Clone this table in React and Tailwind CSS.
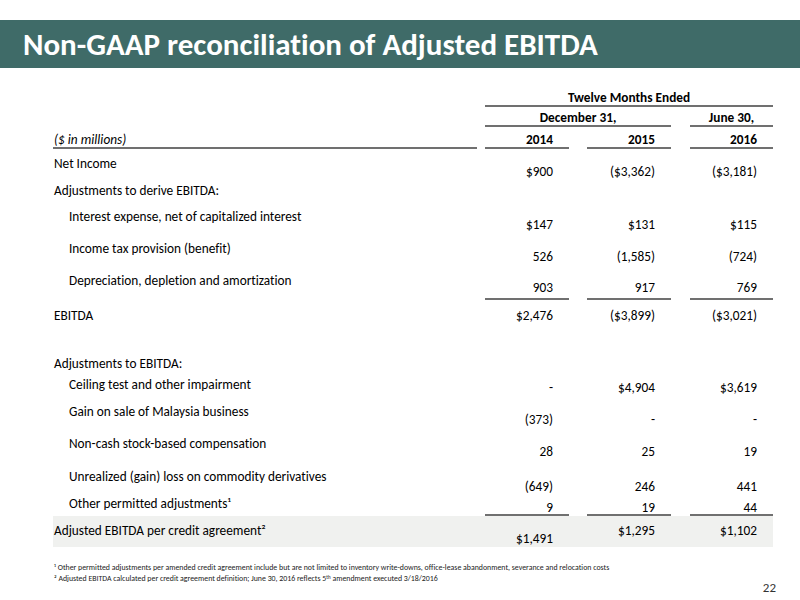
import React from "react";

const LINE = "border-b-2 border-[#707070]";

const rows = [
  { label: "Net Income", h: 31, lp: 7, vals: ["$900", "($3,362)", "($3,181)"], vp: [15, 15, 15] },
  { label: "Adjustments to derive EBITDA:", h: 23, lp: 3 },
  { label: "Interest expense, net of capitalized interest", indent: true, h: 35, lp: 6, vals: ["$147", "$131", "$115"], vp: [14, 14, 14] },
  { label: "Income tax provision (benefit)", indent: true, h: 32, lp: 3, vals: ["526", "(1,585)", "(724)"], vp: [11, 11, 11] },
  { label: "Depreciation, depletion and amortization", indent: true, h: 30, lp: 3, vals: ["903", "917", "769"], vp: [10, 10, 10], line: true },
  { label: "EBITDA", h: 31, lp: 8, vals: ["$2,476", "($3,899)", "($3,021)"], vp: [8, 8, 8] },
  { label: "Adjustments to EBITDA:", h: 41, lp: 25 },
  { label: "Ceiling test and other impairment", indent: true, h: 29, lp: 5, vals: ["-", "$4,904", "$3,619"], vp: [8, 8, 8] },
  { label: "Gain on sale of Malaysia business", indent: true, h: 30, lp: 3, vals: ["(373)", "-", "-"], vp: [11, 11, 11] },
  { label: "Non-cash stock-based compensation", indent: true, h: 32, lp: 5, vals: ["28", "25", "19"], vp: [13, 13, 13] },
  { label: "Unrealized (gain) loss on commodity derivatives", indent: true, h: 33, lp: 6, vals: ["(649)", "246", "441"], vp: [16, 16, 16] },
  { label: "Other permitted adjustments¹", indent: true, h: 20, lp: 0, vals: ["9", "19", "44"], vp: [4, 4, 4], line: true },
  { label: "Adjusted EBITDA per credit agreement²", h: 31, lp: 7, vals: ["$1,491", "$1,295", "$1,102"], vp: [15, 7, 7], shade: true },
];

const colW = ["w-[84px]", "w-[84px]", "w-[83px]"];
const gapW = ["w-[8px]", "w-[18px]", "w-[19px]"];

function Row({ r }) {
  return (
    <div
      className={`flex w-[720px] ${r.shade ? "bg-[#f0f1ef]" : ""}`}
      style={{ height: r.h }}
    >
      <div className={`w-[424px] shrink-0 ${r.indent ? "pl-[16px]" : "pl-[1px]"}`} style={{ paddingTop: r.lp }}>
        {r.label}
      </div>
      {[0, 1, 2].map((i) => (
        <React.Fragment key={i}>
          <div className={`${gapW[i]} shrink-0`} />
          <div
            className={`${colW[i]} shrink-0 text-right pr-4 ${r.line ? LINE : ""}`}
            style={{ paddingTop: r.vals ? r.vp[i] : 0 }}
          >
            {r.vals ? r.vals[i] : ""}
          </div>
        </React.Fragment>
      ))}
    </div>
  );
}

export default function App() {
  return (
    <div className="w-[800px] h-[600px] bg-white text-black font-['Carlito','Liberation_Sans',sans-serif] [font-variant-ligatures:none] overflow-hidden">
      <div className="h-[20px]" />
      <div className="h-[48px] bg-[#3f6b68] flex items-center pl-[23px]">
        <h1 className="text-white font-bold text-[31px] leading-[48px]">
          Non-GAAP reconciliation of Adjusted EBITDA
        </h1>
      </div>

      <div className="ml-[53px] text-[13.3px] leading-[16px]">
        <div className="pt-[22px] flex font-bold">
          <div className="w-[432px] shrink-0" />
          <div className={`w-[288px] text-center leading-[15px] ${LINE}`}>Twelve Months Ended</div>
        </div>
        <div className="mt-[3px] flex font-bold">
          <div className="w-[432px] shrink-0" />
          <div className={`w-[186px] text-center leading-[15px] ${LINE}`}>December 31,</div>
          <div className="w-[19px] shrink-0" />
          <div className={`w-[83px] text-center leading-[15px] ${LINE}`}>June 30,</div>
        </div>
        <div className="mt-[5px] flex">
          <div className={`w-[424px] shrink-0 italic leading-[15px] pl-[1px] ${LINE}`}>($ in millions)</div>
          {[0, 1, 2].map((i) => (
            <React.Fragment key={i}>
              <div className={`${gapW[i]} shrink-0`} />
              <div className={`${colW[i]} shrink-0 text-right pr-4 font-bold leading-[15px] ${LINE}`}>
                {["2014", "2015", "2016"][i]}
              </div>
            </React.Fragment>
          ))}
        </div>

        <div className="flex flex-col">
          {rows.map((r, i) => (
            <Row key={i} r={r} />
          ))}
        </div>
      </div>

      <div className="flex justify-between items-start">
        <div className="ml-[54px] mt-[15px] text-[7.85px] leading-[11px] text-[#222]">
          <div>¹ Other permitted adjustments per amended credit agreement include but are not limited to inventory write-downs, office-lease abandonment, severance and relocation costs</div>
          <div>² Adjusted EBITDA calculated per credit agreement definition; June 30, 2016 reflects 5<sup className="text-[5px]">th</sup> amendment executed 3/18/2016</div>
        </div>
        <div className="mt-[33px] mr-[24px] text-[13px] leading-[16px] text-[#333]">22</div>
      </div>
    </div>
  );
}
